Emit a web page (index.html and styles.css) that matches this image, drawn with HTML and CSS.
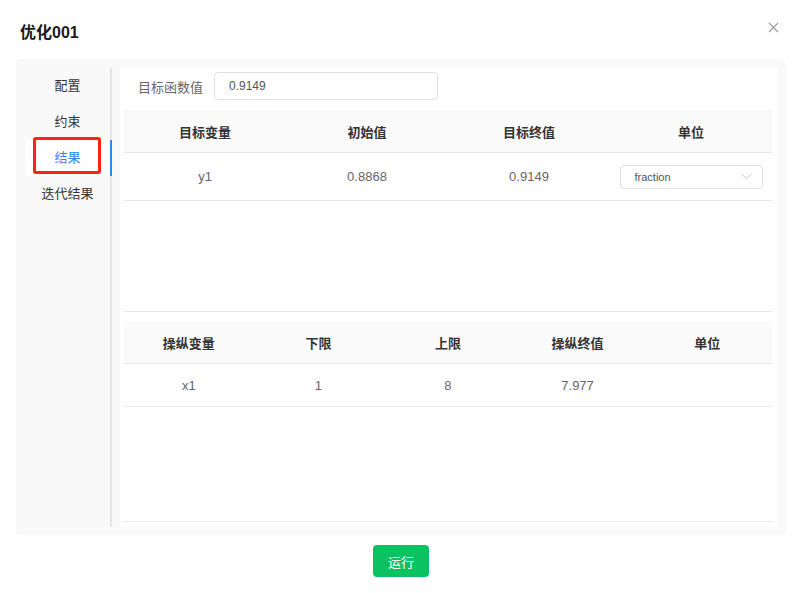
FILE: index.html
```html
<!DOCTYPE html>
<html lang="zh-CN">
<head>
  <meta charset="UTF-8" />
  <title>优化001</title>
  <link rel="stylesheet" href="styles.css">
</head>
<body>

  <div class="dialog">
    <!-- Header -->
    <div class="dialog-header">
      <span class="dialog-title">优化001</span>
      <span class="dialog-close">
        <svg width="11" height="11" viewBox="0 0 11 11">
          <path d="M1 1 L10 10 M10 1 L1 10" stroke="#9a9a9a" stroke-width="1.1" fill="none"/>
        </svg>
      </span>
    </div>

    <!-- Body -->
    <div class="panel">
      <div class="side-tabs">
        <div class="tab">配置</div>
        <div class="tab">约束</div>
        <div class="tab active">结果<span class="mark"></span></div>
        <div class="tab">迭代结果</div>
      </div>

      <div class="content">
        <div class="form-row">
          <label>目标函数值</label>
          <div class="input">0.9149</div>
        </div>

        <div class="table-wrap">
          <table class="target-table">
            <tr>
              <th>目标变量</th>
              <th>初始值</th>
              <th>目标终值</th>
              <th>单位</th>
            </tr>
            <tr>
              <td>y1</td>
              <td>0.8868</td>
              <td>0.9149</td>
              <td>
                <div class="select">
                  <span>fraction</span>
                  <svg width="11" height="7" viewBox="0 0 11 7">
                    <path d="M0.5 0.8 L5.5 5.8 L10.5 0.8" stroke="#c0c4cc" stroke-width="1" fill="none"/>
                  </svg>
                </div>
              </td>
            </tr>
          </table>
        </div>

        <div class="table-wrap second">
          <table>
            <tr>
              <th>操纵变量</th>
              <th>下限</th>
              <th>上限</th>
              <th>操纵终值</th>
              <th>单位</th>
            </tr>
            <tr>
              <td>x1</td>
              <td>1</td>
              <td>8</td>
              <td>7.977</td>
              <td></td>
            </tr>
          </table>
        </div>
      </div>
    </div>

    <!-- Footer -->
    <div class="dialog-footer">
      <button class="btn-run">运行</button>
    </div>
  </div>

</body>
</html>
```

FILE: styles.css
```css
body {
  margin: 0;
  font-family: "Liberation Sans", "Noto Sans CJK SC", sans-serif;
  background-color: #fff;
  color: #333;
}

.dialog {
  width: 800px;
  height: 593px;
}

/* Header */
.dialog-header {
  display: flex;
  justify-content: space-between;
  align-items: flex-start;
  height: 59px;
  padding: 19px 21px 0 20px;
  box-sizing: border-box;
}

.dialog-title {
  font-size: 16px;
  font-weight: bold;
  color: #1a1a1a;
}

.dialog-close {
  margin-top: 3px;
  line-height: 0;
}

/* Panel */
.panel {
  display: flex;
  margin: 0 14px 0 16px;
  padding: 9px 8px 8px 9px;
  height: 476px;
  box-sizing: border-box;
  background-color: #f9f9f9;
  border-radius: 4px;
}

.side-tabs {
  width: 85px;
  border-right: 2px solid #e6e6e6;
  flex-shrink: 0;
}

.tab {
  position: relative;
  height: 36px;
  line-height: 36px;
  text-align: center;
  font-size: 13px;
  color: #333;
}

.tab.active {
  background-color: #fff;
  color: #2f86f6;
  margin-right: -2px;
  border-right: 2px solid #2f86f6;
}

.tab .mark {
  position: absolute;
  left: 8px;
  top: -3px;
  width: 68px;
  height: 37px;
  border: 3px solid #fa2314;
  border-radius: 3px;
  box-sizing: border-box;
}

.content {
  flex: 1;
  margin-left: 8px;
  background-color: #fff;
  padding: 4px 6px 0 4px;
}

.form-row {
  display: flex;
  align-items: center;
  height: 28px;
  padding-left: 14px;
}

.form-row label {
  font-size: 13px;
  color: #666;
  width: 76px;
}

.input {
  width: 224px;
  height: 28px;
  box-sizing: border-box;
  border: 1px solid #dcdfe6;
  border-radius: 4px;
  padding-left: 14px;
  font-size: 12px;
  line-height: 26px;
  color: #555;
}

.table-wrap {
  margin-top: 10px;
  height: 202px;
  border-bottom: 1px solid #e8e8e8;
  box-sizing: border-box;
}

.table-wrap.second {
  margin-top: 9px;
  height: 201px;
}

table {
  width: 100%;
  border-collapse: collapse;
  table-layout: fixed;
}

th {
  height: 42px;
  background-color: #fafafa;
  font-size: 13px;
  font-weight: bold;
  color: #333;
  border-bottom: 1px solid #e8e8e8;
  padding: 0;
}

td {
  height: 42px;
  text-align: center;
  font-size: 13px;
  color: #666;
  border-bottom: 1px solid #e8e8e8;
  padding: 0;
}

.target-table td {
  height: 47px;
}

.select {
  display: flex;
  justify-content: space-between;
  align-items: center;
  width: 143px;
  height: 24px;
  margin: 0 auto;
  box-sizing: border-box;
  border: 1px solid #dcdfe6;
  border-radius: 4px;
  padding: 0 10px 0 14px;
  font-size: 11px;
  color: #555;
}

/* Footer */
.dialog-footer {
  display: flex;
  justify-content: center;
  padding-top: 10px;
  padding-left: 2px;
}

.btn-run {
  width: 56px;
  height: 32px;
  border: none;
  border-radius: 4px;
  background-color: #0bc160;
  color: #fff;
  font-family: "Liberation Sans", "Noto Sans CJK SC", sans-serif;
  font-size: 13px;
  cursor: pointer;
}
```
